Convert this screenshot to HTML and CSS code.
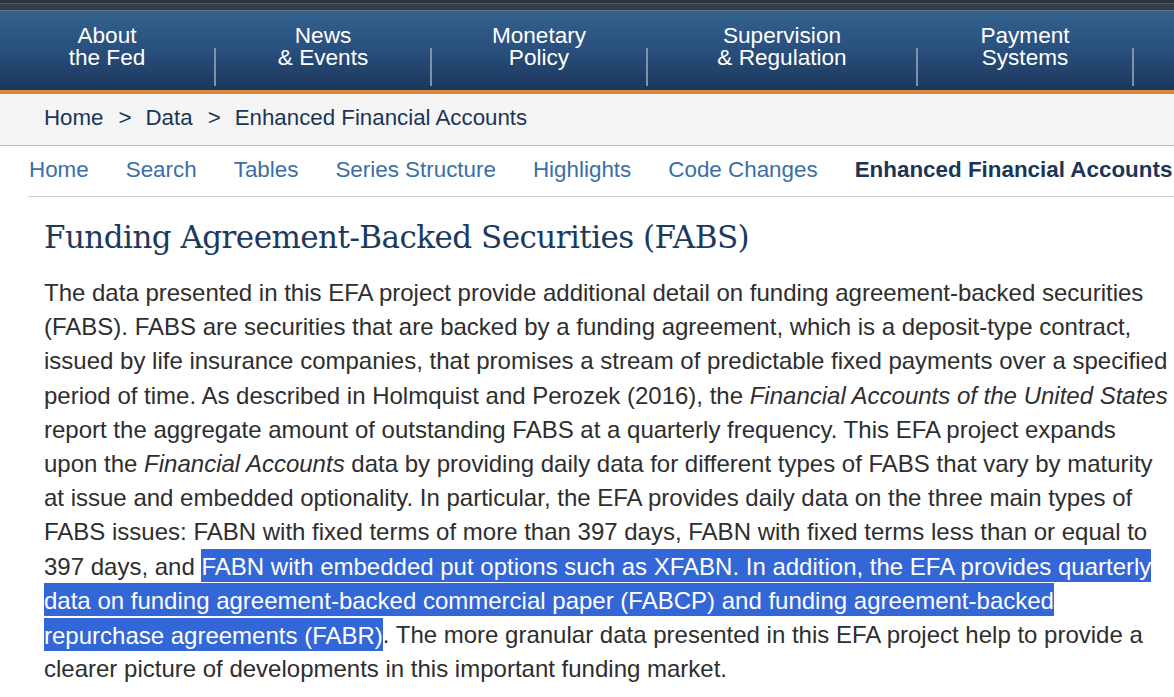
FILE: index.html
```html
<!DOCTYPE html>
<html lang="en">
<head>
<meta charset="utf-8">
<title>Funding Agreement-Backed Securities (FABS)</title>
<link rel="stylesheet" href="styles.css">
</head>
<body>
<div class="utility"></div>
<nav class="mainnav">
  <a class="mn-item" href="#">About<br>the Fed</a><span class="mn-sep"></span>
  <a class="mn-item" href="#">News<br>&amp; Events</a><span class="mn-sep"></span>
  <a class="mn-item" href="#">Monetary<br>Policy</a><span class="mn-sep"></span>
  <a class="mn-item mn-wide" href="#">Supervision<br>&amp; Regulation</a><span class="mn-sep"></span>
  <a class="mn-item" href="#">Payment<br>Systems</a><span class="mn-sep"></span>
</nav>
<div class="breadcrumb">
  <a href="#">Home</a><span class="bc-sep">&gt;</span><a href="#">Data</a><span class="bc-sep">&gt;</span><a href="#">Enhanced Financial Accounts</a>
</div>
<nav class="subnav">
  <a href="#">Home</a>
  <a href="#">Search</a>
  <a href="#">Tables</a>
  <a href="#">Series Structure</a>
  <a href="#">Highlights</a>
  <a href="#">Code Changes</a>
  <a href="#" class="active">Enhanced Financial Accounts</a>
</nav>
<main class="content">
  <h1 class="title">Funding Agreement-Backed Securities (FABS)</h1>
  <p class="body-text">The data presented in this EFA project provide additional detail on funding agreement-backed securities (FABS). FABS are securities that are backed by a funding agreement, which is a deposit-type contract, issued by life insurance companies, that promises a stream of predictable fixed payments over a specified period of time. As described in Holmquist and Perozek (2016), the <em>Financial Accounts of the United States</em> report the aggregate amount of outstanding FABS at a quarterly frequency. This EFA project expands upon the <em>Financial Accounts</em> data by providing daily data for different types of FABS that vary by maturity at issue and embedded optionality. In particular, the EFA provides daily data on the three main types of FABS issues: FABN with fixed terms of more than 397 days, FABN with fixed terms less than or equal to 397 days, and <span class="sel">FABN with embedded put options such as XFABN. In addition, the EFA provides quarterly data on funding agreement-backed commercial paper (FABCP) and funding agreement-backed repurchase agreements (FABR)</span>. The more granular data presented in this EFA project help to provide a clearer picture of developments in this important funding market.</p>
</main>
</body>
</html>
```
FILE: styles.css
```css
html, body {
  margin: 0;
  padding: 0;
  background: #ffffff;
}
body {
  font-family: "Liberation Sans", Arial, sans-serif;
  width: 1174px;
  overflow: hidden;
}
a {
  text-decoration: none;
}
.utility {
  height: 11px;
  background: linear-gradient(to bottom,
    #2a323e 0, #2a323e 3px,
    #4e5766 3px, #4e5766 4px,
    #333d4c 4px, #333d4c 10px,
    #687282 10px, #687282 11px);
}
.mainnav {
  display: flex;
  height: 79px;
  background: linear-gradient(to bottom, #33628f 0%, #2a5180 45%, #1b375a 100%);
  border-bottom: 4px solid #d4893b;
}
.mn-item {
  width: 214px;
  flex: none;
  box-sizing: border-box;
  padding-top: 14px;
  text-align: center;
  color: #ffffff;
  font-size: 22.6px;
  line-height: 22px;
}
.mn-wide {
  width: 268px;
}
.mn-sep {
  flex: none;
  width: 2px;
  height: 38px;
  margin-top: 37px;
  background: #7d93ab;
}
.breadcrumb {
  background: #f5f5f5;
  border-bottom: 1px solid #bbbbbb;
  height: 51px;
  box-sizing: content-box;
  padding-left: 44px;
  font-size: 22.3px;
  line-height: 47px;
}
.breadcrumb a {
  color: #1b3556;
}
.bc-sep {
  color: #1b3556;
  margin: 0 14px 0 15px;
}
.subnav {
  display: flex;
  gap: 37px;
  margin-left: 28px;
  padding-left: 1px;
  height: 50px;
  border-bottom: 1px solid #cfcfcf;
  font-size: 22.4px;
  line-height: 47px;
  white-space: nowrap;
}
.subnav a {
  color: #3a6fa5;
}
.subnav a.active {
  color: #1b3556;
  font-weight: bold;
}
.content {
  padding: 0 4px 0 44px;
}
.title {
  font-family: "DejaVu Serif", Georgia, serif;
  font-weight: normal;
  font-size: 31px;
  letter-spacing: -0.55px;
  line-height: 40px;
  color: #1c3a5e;
  margin: 20px 0 18px 0;
}
.body-text {
  margin: 0;
  padding-top: 1px;
  font-size: 24px;
  line-height: 34.2px;
  color: #2e2e2e;
}
.body-text em {
  font-style: italic;
}
.sel {
  background: #3366d6;
  color: #ffffff;
  padding: 3.5px 0 2.5px 0;
}
```
